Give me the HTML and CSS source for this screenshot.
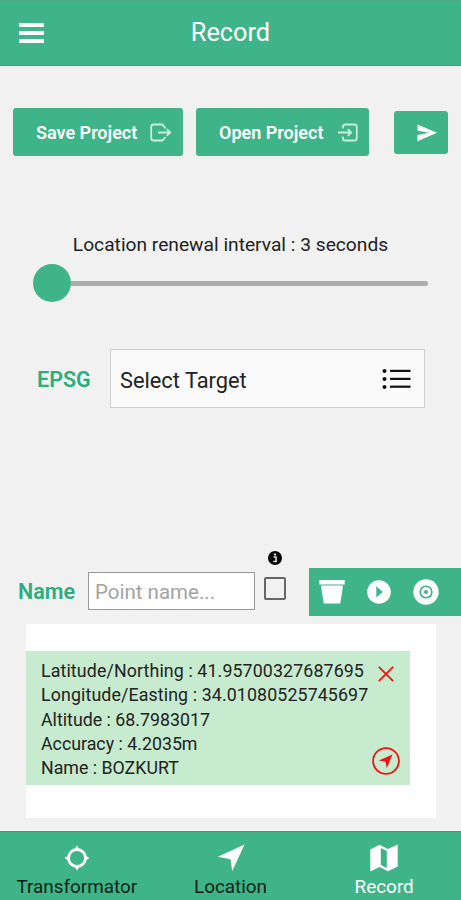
FILE: index.html
```html
<!DOCTYPE html>
<html lang="en">
<head>
  <meta charset="UTF-8">
  <title>Record</title>
  <meta name="viewport" content="width=device-width, initial-scale=1.0">
  <link rel="stylesheet" href="styles.css">
</head>
<body>

  <header class="topbar">
    <div class="menu"><span></span><span></span><span></span></div>
    <h1>Record</h1>
  </header>

  <main>
    <div class="actions">
      <button class="btn">
        <span class="save-label">Save Project</span>
        <svg width="22" height="20" viewBox="0 0 22 20" fill="none" stroke="#c8f0de" stroke-width="1.8">
          <path d="M15.5 5.5 L12.5 1.5 H3.5 Q1.2 1.5 1.2 4 V15 Q1.2 17.5 3.5 17.5 H12.5 L15.5 14"/>
          <path d="M8 9.5 H20 M16.8 6.2 L20.2 9.5 L16.8 12.8"/>
        </svg>
      </button>
      <button class="btn open">
        <span class="open-label">Open Project</span>
        <svg width="22" height="20" viewBox="0 0 22 20" fill="none" stroke="#c8f0de" stroke-width="1.8">
          <path d="M5.8 5.5 V4 Q5.8 1.5 8.2 1.5 H17.5 Q19.8 1.5 19.8 4 V15 Q19.8 17.5 17.5 17.5 H8.2 Q5.8 17.5 5.8 15 V13.5"/>
          <path d="M1 9.5 H14 M10.8 6.2 L14.2 9.5 L10.8 12.8"/>
        </svg>
      </button>
      <button class="btn send">
        <svg width="20" height="18" viewBox="0 0 20 18" fill="#fff">
          <path d="M0.5 0.5 L20 8.8 L0.5 17.3 V11 L12 8.8 L0.5 6.8 Z"/>
        </svg>
      </button>
    </div>

    <p class="interval">Location renewal interval : 3 seconds</p>
    <div class="slider">
      <div class="thumb"></div>
      <div class="track"></div>
    </div>

    <div class="epsg">
      <label>EPSG</label>
      <div class="select">
        <span>Select Target</span>
        <svg width="29" height="22" viewBox="0 0 29 22" fill="#111">
          <circle cx="2.5" cy="3" r="2"/>
          <circle cx="2.5" cy="11" r="2"/>
          <circle cx="2.5" cy="19" r="2"/>
          <rect x="8" y="1.8" width="20.5" height="2.2"/>
          <rect x="8" y="9.8" width="20.5" height="2.2"/>
          <rect x="8" y="17.6" width="20.5" height="2.2"/>
        </svg>
      </div>
    </div>

    <div class="name-row">
      <label>Name</label>
      <input class="point" type="text" placeholder="Point name...">
      <div class="check">
        <svg width="14" height="14" viewBox="0 0 14 14">
          <circle cx="7" cy="7" r="7" fill="#000"/>
          <path d="M5.5 6 H8 V10.5 M5.2 10.5 H9" fill="none" stroke="#ddd" stroke-width="1.6"/>
          <rect x="6" y="2.5" width="2.2" height="2" fill="#ddd"/>
        </svg>
        <span class="box"></span>
      </div>
      <div class="tools">
        <svg width="26" height="24" viewBox="0 0 26 24" fill="#fff">
          <path d="M0.3 0 H25.7 V4.5 H0.3 Z"/>
          <path d="M2 5.5 H24 L21.3 23.5 H4.7 Z"/>
        </svg>
        <svg width="24" height="24" viewBox="0 0 24 24">
          <circle cx="12" cy="12" r="11.8" fill="#fff"/>
          <path d="M9.3 6.3 L15.8 12 L9.3 17.5 Z" fill="#3fb488"/>
        </svg>
        <svg width="26" height="26" viewBox="0 0 26 26">
          <circle cx="13" cy="13" r="12.7" fill="#fff"/>
          <circle cx="13" cy="13" r="5.8" fill="none" stroke="#3fb488" stroke-width="1.6"/>
          <circle cx="13" cy="13" r="2" fill="#3fb488"/>
        </svg>
      </div>
    </div>

    <div class="list">
      <div class="item">
        <div class="info">
          <p class="coord">Latitude/Northing : 41.95700327687695</p>
          <p class="coord">Longitude/Easting : 34.01080525745697</p>
          <p>Altitude : 68.7983017</p>
          <p>Accuracy : 4.2035m</p>
          <p>Name : BOZKURT</p>
        </div>
        <div class="item-icons">
          <svg width="16" height="16" viewBox="0 0 16 16" stroke="#f01414" stroke-width="1.8">
            <path d="M0.8 0.8 L15.2 15.2 M15.2 0.8 L0.8 15.2"/>
          </svg>
          <svg width="28" height="28" viewBox="0 0 28 28">
            <circle cx="14" cy="14" r="12.9" fill="none" stroke="#f01414" stroke-width="1.8"/>
            <path d="M20.5 7.5 L14.8 21.3 L13.5 14.8 L6.8 13.6 Z" fill="#f01414"/>
          </svg>
        </div>
      </div>
    </div>
  </main>

  <nav class="tabs">
    <a class="tab">
      <svg width="26" height="28" viewBox="0 0 26 28">
        <circle cx="13" cy="14" r="8.5" fill="none" stroke="#fff" stroke-width="2.8"/>
        <path d="M13 1.5 L15.5 5.5 H10.5 Z M13 26.5 L15.5 22.5 H10.5 Z M0.5 14 L4.5 11.5 V16.5 Z M25.5 14 L21.5 11.5 V16.5 Z" fill="#fff"/>
      </svg>
      <span>Transformator</span>
    </a>
    <a class="tab">
      <svg width="28" height="28" viewBox="0 0 28 28" fill="#fff">
        <path d="M27.5 0.5 L15.2 27.3 L13.6 15.2 L0.8 12.8 Z"/>
      </svg>
      <span>Location</span>
    </a>
    <a class="tab active">
      <svg width="28" height="28" viewBox="0 0 28 28">
        <path d="M0.3 5.5 L9.5 0.8 L18 5 L27.7 0.5 V22.5 L18 27.2 L9.5 23 L0.3 27.4 Z" fill="#fff"/>
        <path d="M10.8 4 L16.8 7 V24 L10.8 21 Z" fill="#3fb488"/>
      </svg>
      <span>Record</span>
    </a>
  </nav>

</body>
</html>
```

FILE: styles.css
```css
* {
  box-sizing: border-box;
}

body {
  margin: 0;
  height: 900px;
  display: flex;
  flex-direction: column;
  background-color: #f1f1f1;
  font-family: Roboto, sans-serif;
  color: #222;
  overflow: hidden;
}

p, h1 {
  margin: 0;
  font-weight: 400;
  white-space: nowrap;
}

svg {
  display: block;
  flex-shrink: 0;
}

.topbar {
  height: 66px;
  padding: 0 19px;
  display: grid;
  grid-template-columns: 26px 1fr 26px;
  align-items: center;
  background-color: #3fb488;
  border-top: 1px solid #4aa886;
  border-bottom: 1px solid #2aa77a;
}

.topbar h1 {
  color: #fff;
  font-size: 25.3px;
  text-align: center;
  line-height: 30px;
}

.menu {
  display: flex;
  flex-direction: column;
  gap: 4px;
}

.menu span {
  height: 4px;
  width: 25px;
  background-color: #fff;
}

main {
  flex: 1;
}

.actions {
  display: flex;
  align-items: center;
  padding: 42px 13px 0;
}

.btn {
  display: flex;
  align-items: center;
  justify-content: space-between;
  width: 170px;
  height: 48px;
  margin: 0;
  padding: 1px 11px 0 23px;
  border: none;
  border-radius: 3px;
  background-color: #3fb488;
  color: #fff;
  font-family: inherit;
  font-size: 18px;
  font-weight: 600;
  white-space: nowrap;
}

.open {
  width: 173px;
  margin-left: 13px;
  padding-right: 10px;
}

.send {
  width: 54px;
  height: 43px;
  margin-left: auto;
}

.interval {
  margin-top: 77px;
  font-size: 19.2px;
  line-height: 24px;
  text-align: center;
}

.slider {
  display: flex;
  align-items: center;
  margin: 7px 33px 0;
}

.thumb {
  width: 38px;
  height: 38px;
  border-radius: 50%;
  background-color: #3fb488;
}

.track {
  flex: 1;
  height: 5px;
  border-radius: 0 3px 3px 0;
  background-color: #adadad;
}

.epsg {
  display: flex;
  align-items: center;
  margin-top: 47px;
  padding-left: 37px;
}

label {
  color: #29ae7e;
  font-weight: 600;
  font-size: 21.5px;
  padding-top: 2px;
}

.epsg label {
  width: 73px;
}

.select {
  display: flex;
  align-items: center;
  justify-content: space-between;
  width: 315px;
  height: 59px;
  padding: 0 13px 0 9px;
  border: 1px solid #cfcfcf;
  background-color: #fafafa;
  font-size: 21.8px;
}

.select span {
  padding-top: 3px;
}

.name-row {
  display: flex;
  align-items: center;
  height: 68px;
  margin-top: 148px;
  padding: 1px 0 0 18px;
}

.name-row label {
  width: 70px;
}

.point {
  width: 167px;
  height: 38px;
  padding: 3px 6px 0;
  border: 1px solid #999;
  background-color: #fff;
  font-family: inherit;
  font-size: 20.5px;
}

.point::placeholder {
  color: #a3a3a3;
}

.check {
  display: flex;
  flex-direction: column;
  align-items: center;
  gap: 12px;
  width: 23px;
  margin: 0 23px 31px 8px;
}

.box {
  width: 22px;
  height: 23px;
  border: 2px solid #666;
  border-radius: 2px;
}

.tools {
  display: flex;
  align-items: center;
  width: 152px;
  height: 48px;
  margin-top: 2px;
  padding-left: 10px;
  gap: 22px;
  background-color: #3fb488;
}

.list {
  width: 410px;
  height: 194px;
  margin-left: 26px;
  padding-top: 27px;
  background-color: #fff;
}

.item {
  display: flex;
  width: 384px;
  height: 134px;
  padding: 8px 0 0 15px;
  background-color: #c7ebcf;
}

.info {
  width: 331px;
  font-size: 17.8px;
  line-height: 24.3px;
}

.coord {
  letter-spacing: 0.12px;
}

.item-icons {
  display: flex;
  flex-direction: column;
  align-items: center;
  justify-content: space-between;
  padding: 7px 0 10px;
}

.tabs {
  display: flex;
  height: 69px;
  background-color: #3fb488;
  border-top: 1px solid #2aa77a;
}

.tab {
  flex: 1;
  display: flex;
  flex-direction: column;
  align-items: center;
  padding-top: 12px;
  font-size: 18.9px;
  line-height: 30px;
  color: #0c1f18;
}

.tab.active {
  color: #fff;
}
```
